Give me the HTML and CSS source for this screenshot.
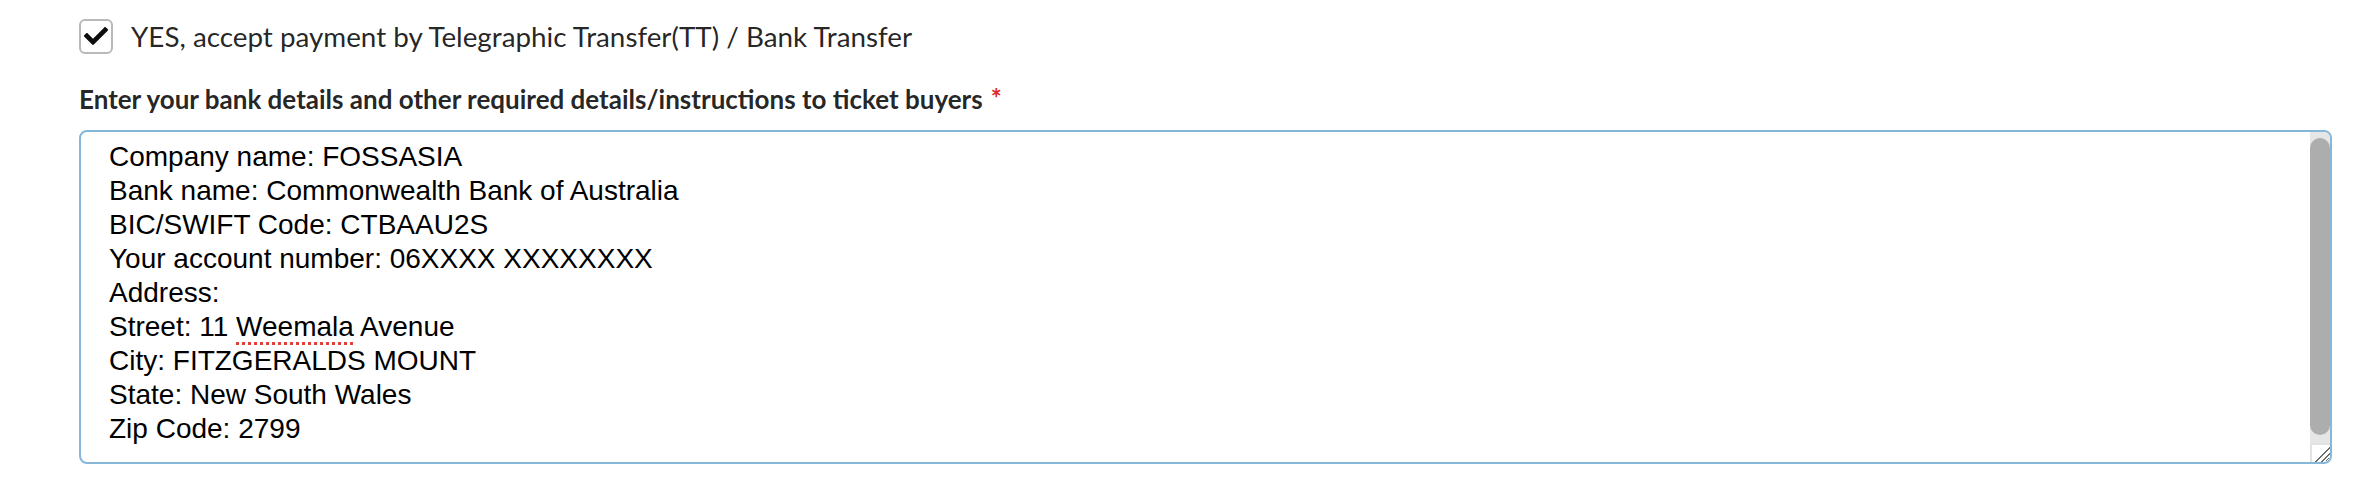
FILE: index.html
```html
<!DOCTYPE html>
<html lang="en">
<head>
<meta charset="utf-8">
<title>Bank transfer settings</title>
<link rel="stylesheet" href="styles.css">
</head>
<body>
<form class="form">
  <div class="field check-field">
    <label class="checkbox">
      <span class="box">
        <svg class="tick" viewBox="0 0 512 512" aria-hidden="true"><path d="M173.898 439.404l-166.4-166.4c-9.997-9.997-9.997-26.206 0-36.204l36.203-36.204c9.997-9.998 26.207-9.998 36.204 0L192 312.69 432.095 72.596c9.997-9.997 26.207-9.997 36.204 0l36.203 36.204c9.997 9.997 9.997 26.206 0 36.204l-294.4 294.401c-9.998 9.997-26.207 9.997-36.204-.001z"/></svg>
      </span>
      <span class="check-text">YES, accept payment by Telegraphic Transfer(TT) / Bank Transfer</span>
    </label>
  </div>
  <div class="field">
    <label class="field-label required">Enter your bank details and other required details/instructions to ticket buyers</label>
    <div class="textarea-wrap">
      <div class="textarea" contenteditable="true" role="textbox" aria-multiline="true">
        <div class="line">Company name: FOSSASIA</div>
        <div class="line">Bank name: Commonwealth Bank of Australia</div>
        <div class="line">BIC/SWIFT Code: CTBAAU2S</div>
        <div class="line">Your account number: 06XXXX XXXXXXXX</div>
        <div class="line">Address:</div>
        <div class="line"><span>Street: 11 </span><span class="misspelt">Weemala</span><span> Avenue</span></div>
        <div class="line">City: FITZGERALDS MOUNT</div>
        <div class="line">State: New South Wales</div>
        <div class="line">Zip Code: 2799</div>
      </div>
      <div class="scrollbar" aria-hidden="true"><div class="thumb"></div></div>
      <div class="corner" aria-hidden="true"></div>
    </div>
  </div>
</form>
</body>
</html>
```
FILE: styles.css
```css
html, body {
  margin: 0;
  padding: 0;
  background: #ffffff;
}

body {
  font-family: Lato, "Liberation Sans", Arial, sans-serif;
  color: rgba(0, 0, 0, 0.87);
}

.form {
  padding: 18px 44px 0 79px;
}

.check-field {
  height: 35px;
}

.checkbox {
  display: flex;
  align-items: center;
  gap: 18px;
  font-size: 27.8px;
  line-height: 34px;
}

.box {
  box-sizing: border-box;
  width: 34px;
  height: 35px;
  border: 2px solid #b9b9ba;
  border-radius: 6px;
  display: flex;
  align-items: center;
  justify-content: center;
  background: #fff;
}

.tick {
  width: 24px;
  height: 24px;
  fill: #0d0d0d;
}

.check-text {
  color: rgba(0, 0, 0, 0.87);
  padding-top: 2px;
}

.field-label {
  display: block;
  margin-top: 29px;
  margin-bottom: 14px;
  font-size: 26px;
  line-height: 34px;
  font-weight: 700;
  color: rgba(0, 0, 0, 0.87);
}

.required::after {
  content: "*";
  color: #db2828;
  margin-left: 8px;
  vertical-align: top;
  position: relative;
  top: -1px;
}

.textarea-wrap {
  position: relative;
}

.textarea {
  box-sizing: border-box;
  height: 334px;
  border: 2px solid #85b7d9;
  border-radius: 8px;
  padding: 8px 50px 32px 28px;
  font-family: "Liberation Sans", Arial, Helvetica, sans-serif;
  font-size: 28px;
  line-height: 34px;
  color: #000;
  overflow: hidden;
  resize: vertical;
  outline: none;
  background: #fff;
}

.line {
  height: 34px;
  white-space: nowrap;
}

.scrollbar {
  position: absolute;
  top: 2px;
  right: 2px;
  bottom: 21px;
  width: 20px;
  background: #e6e6e6;
  border-top-right-radius: 6px;
  box-sizing: border-box;
  padding-top: 6px;
}

.thumb {
  height: 297px;
  border-radius: 10px;
  background: #adadad;
}

.corner {
  position: absolute;
  right: 2px;
  bottom: 2px;
  width: 20px;
  height: 19px;
  box-sizing: border-box;
  border-top: 2px solid #e2e2e2;
  border-left: 2px solid #e2e2e2;
  border-bottom-right-radius: 6px;
  background:
    linear-gradient(135deg, transparent 0 55%, #6e6e6e 55% 62%, transparent 62% 72%, #6e6e6e 72% 79%, transparent 79%);
}

.misspelt {
  text-decoration: underline dotted #e0403a;
  text-decoration-thickness: 3px;
  text-underline-offset: 6px;
}
```
